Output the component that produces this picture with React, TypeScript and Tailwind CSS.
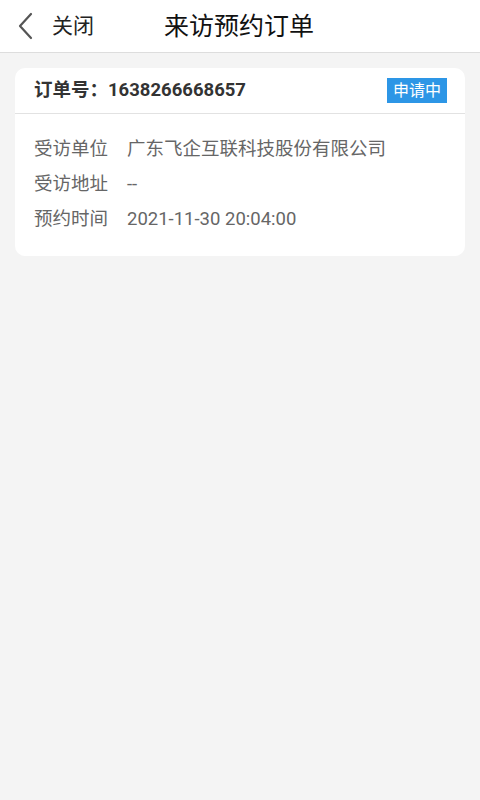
import React from "react";

export default function App() {
  const rows: [string, string][] = [
    ["受访单位", "广东飞企互联科技股份有限公司"],
    ["受访地址", "--"],
    ["预约时间", "2021-11-30 20:04:00"],
  ];
  return (
    <div
      className="w-[480px] h-[800px] bg-[#f4f4f4] flex flex-col"
      style={{ fontFamily: 'Roboto, "Noto Sans CJK SC", sans-serif' }}
    >
      <div className="h-[53px] bg-white border-b border-[#dddddd] flex items-center relative shrink-0">
        <div className="flex items-center pl-[17px]">
          <svg width="18" height="28" viewBox="0 0 18 28" className="mr-[17px]">
            <path d="M14 2 L3 14 L14 26" fill="none" stroke="#555" strokeWidth="2.2" strokeLinecap="round" strokeLinejoin="round" />
          </svg>
          <span className="text-[21px] text-[#222] leading-none">关闭</span>
        </div>
        <div className="absolute left-[164px] top-0 h-full flex items-center text-[25px] text-[#111] leading-none">
          来访预约订单
        </div>
      </div>
      <div className="mx-[15px] mt-[15px] bg-white rounded-[10px]">
        <div className="h-[46px] flex items-center justify-between pl-[19px] pr-[18px] border-b border-[#e2e2e2]">
          <span className="text-[18.5px] font-bold text-[#333]">订单号：1638266668657</span>
          <span className="bg-[#2d96e6] text-white text-[16px] h-[25px] px-[6px] flex items-center leading-none">申请中</span>
        </div>
        <div className="pt-[24px] pb-[24px] flex flex-col gap-[11px]">
          {rows.map(([k, v]) => (
            <div key={k} className="flex items-center h-[24px] pl-[19px] text-[18.5px] text-[#666]">
              <span className="w-[93px]">{k}</span>
              <span>{v}</span>
            </div>
          ))}
        </div>
      </div>
    </div>
  );
}
